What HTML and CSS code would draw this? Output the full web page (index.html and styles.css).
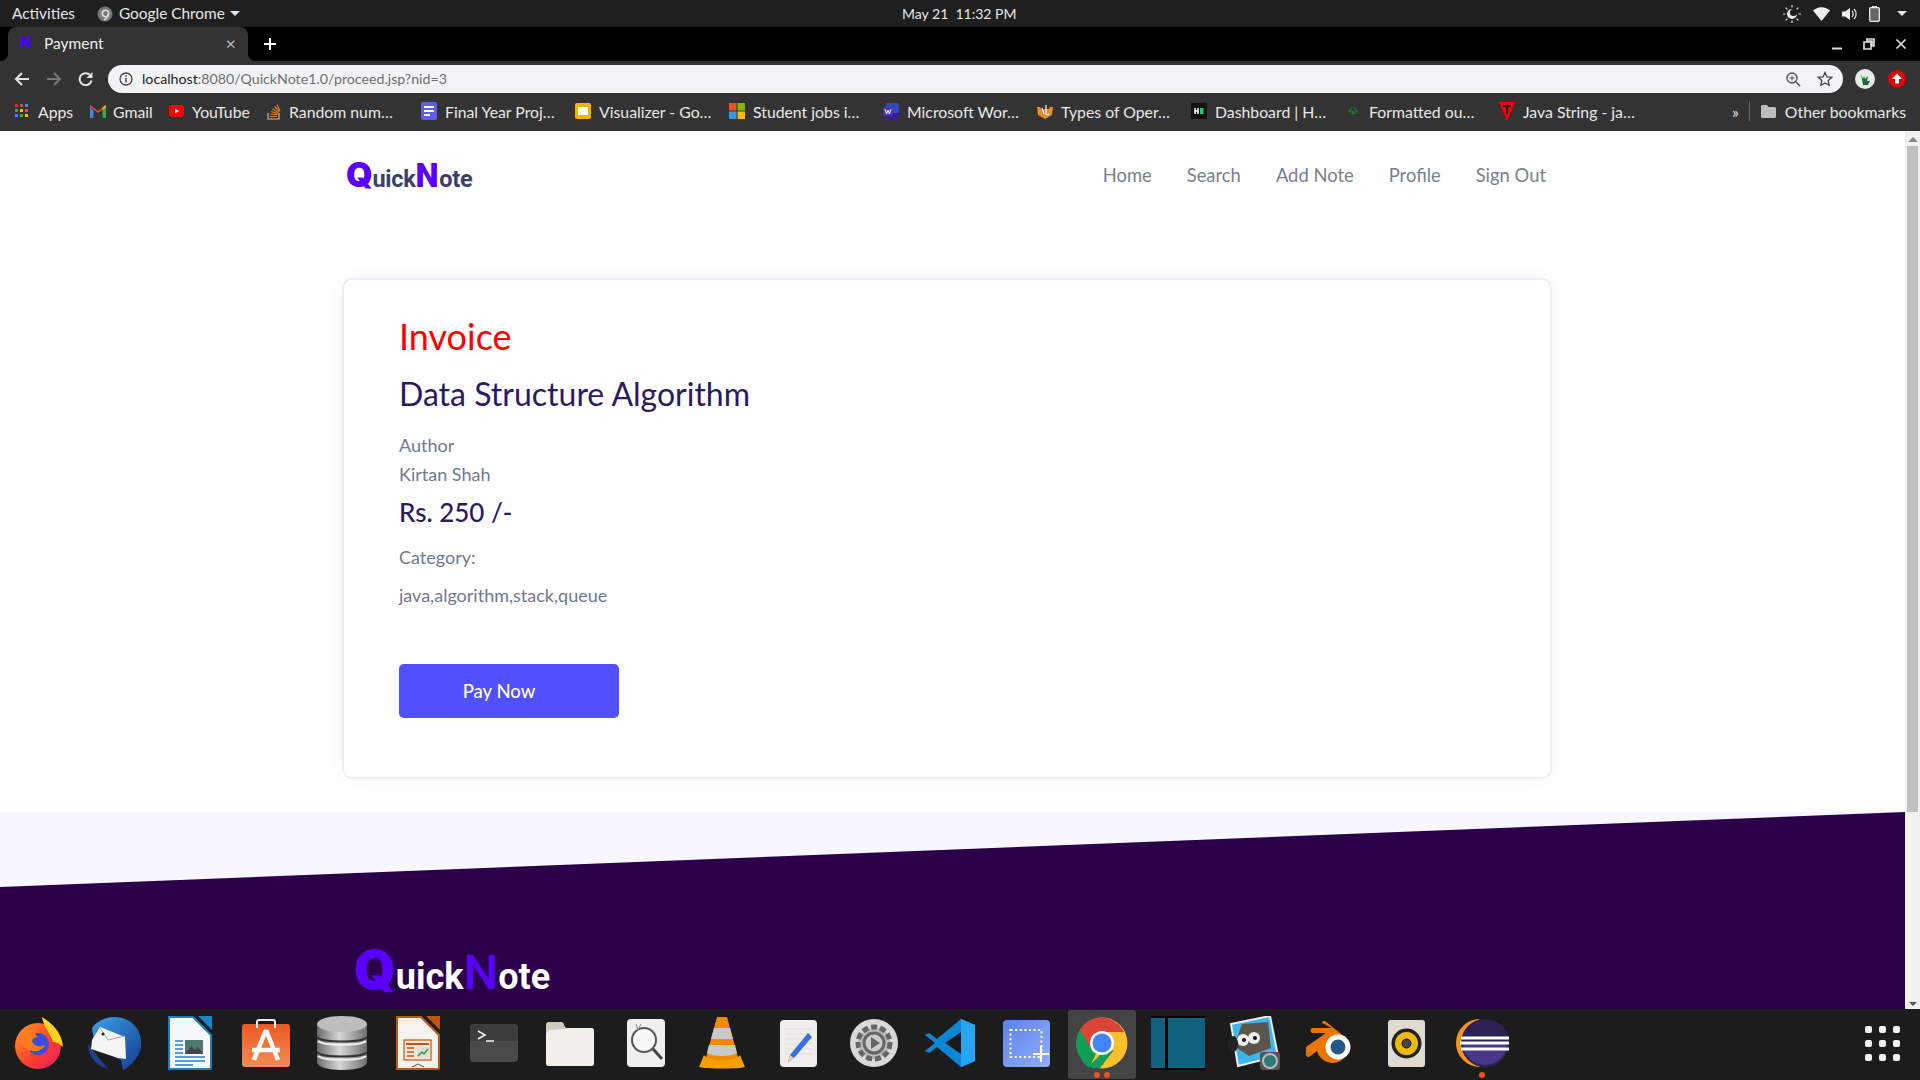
FILE: index.html
```html
<!DOCTYPE html>
<html lang="en">
<head>
<meta charset="utf-8">
<title>Payment</title>
<link rel="stylesheet" href="styles.css">
</head>
<body>
<div class="desktop">
  <div class="topbar">
    <div class="top-left">
      <span class="top-activities">Activities</span>
      <svg class="top-chrome" width="16" height="16" viewBox="0 0 16 16"><circle cx="8" cy="8" r="7.5" fill="#777"/><circle cx="8.5" cy="7.5" r="3.2" fill="none" stroke="#ddd" stroke-width="1.6"/><path d="M11 8c0 3-2 5-4 6" stroke="#ddd" stroke-width="1.4" fill="none"/></svg>
      <span>Google Chrome</span>
      <span class="caret"></span>
    </div>
    <div class="top-clock">May 21&nbsp; 11:32 PM</div>
    <div class="top-right">
      <svg width="18" height="18" viewBox="0 0 18 18"><circle cx="9" cy="9" r="5" fill="#e8e8e8"/><circle cx="10.5" cy="7.5" r="3.6" fill="#1f1f1f"/><g stroke="#ddd" stroke-width="1.2"><path d="M9 0v2.5M9 15.500V18M0 9h2.500M15.500 9H18M2.600 2.600l1.800 1.800M13.600 13.600l1.800 1.800M2.600 15.400l1.800-1.800M13.600 4.400l1.800-1.800"/></g></svg>
      <svg width="17" height="14" viewBox="0 0 17 14"><path d="M0 3.500C5 -1 12 -1 17 3.500L8.500 14Z" fill="#eee"/></svg>
      <svg width="15" height="14" viewBox="0 0 15 14"><path d="M0 4.500h3L8 1v12L3 9.500H0Z" fill="#eee"/><path d="M10 4c1.500 1.500 1.500 4.500 0 6M12 2c2.800 2.600 2.800 7.400 0 10" stroke="#eee" fill="none" stroke-width="1.200"/></svg>
      <svg width="11" height="16" viewBox="0 0 11 16"><rect x="3" width="5" height="2" fill="#eee"/><rect x=".7" y="1.700" width="9.600" height="13.600" rx="1" fill="#666" stroke="#eee" stroke-width="1.300"/></svg>
      <span class="caret"></span>
    </div>
  </div>

  <div class="tabstrip">
    <div class="tab">
      <span class="fav-n">N</span>
      <span class="tab-title">Payment</span>
      <span class="tab-close">×</span>
    </div>
    <svg class="tab-new" width="14" height="14" viewBox="0 0 14 14"><path d="M7 1v12M1 7h12" stroke="#fff" stroke-width="2"/></svg>
    <div class="win-controls">
      <svg width="12" height="12" viewBox="0 0 12 12"><path d="M1 10.500h10" stroke="#ddd" stroke-width="2"/></svg>
      <svg width="12" height="12" viewBox="0 0 12 12"><path d="M4 1h7v7H9V3H4ZM1 4h7v7H1Z" fill="none" stroke="#ddd" stroke-width="1.700"/></svg>
      <svg width="12" height="12" viewBox="0 0 12 12"><path d="M1.500 1.500l9 9M10.500 1.500l-9 9" stroke="#ddd" stroke-width="1.700"/></svg>
    </div>
  </div>

  <div class="toolbar">
    <svg class="nav-ico" width="16" height="16" viewBox="0 0 16 16"><path d="M15 8H2M8 2L2 8l6 6" fill="none" stroke="#e3e3e3" stroke-width="2"/></svg>
    <svg class="nav-ico" width="16" height="16" viewBox="0 0 16 16"><path d="M1 8h13M8 2l6 6-6 6" fill="none" stroke="#777" stroke-width="2"/></svg>
    <svg class="nav-ico" width="16" height="16" viewBox="0 0 16 16"><path d="M13.500 9.500A6 6 0 1 1 12 4" fill="none" stroke="#e3e3e3" stroke-width="2"/><path d="M14.500 1v6h-6Z" fill="#e3e3e3"/></svg>
    <div class="omnibox">
      <svg class="info-ico" width="14" height="14" viewBox="0 0 14 14"><circle cx="7" cy="7" r="6" fill="none" stroke="#444" stroke-width="1.300"/><path d="M7 6v4.500M7 3.300v1.500" stroke="#444" stroke-width="1.500"/></svg>
      <span class="url"><span class="url-host">localhost</span>:8080/QuickNote1.0/proceed.jsp?nid=3</span>
      <svg class="omni-ico" width="16" height="16" viewBox="0 0 16 16"><circle cx="7" cy="7" r="5" fill="none" stroke="#555" stroke-width="1.400"/><path d="M11 11l4 4" stroke="#555" stroke-width="1.600"/><path d="M7 4.500v5M4.500 7h5" stroke="#555"/></svg>
      <svg class="omni-ico" width="16" height="16" viewBox="0 0 16 16"><path d="M8 1.500l2 4.400 4.800.5-3.600 3.200 1 4.700L8 11.900l-4.200 2.400 1-4.700L1.200 6.400 6 5.900Z" fill="none" stroke="#444" stroke-width="1.300"/></svg>
    </div>
    <svg class="ext-ico" width="20" height="20" viewBox="0 0 20 20"><circle cx="10" cy="10" r="10" fill="#e8ece8"/><path d="M6 5l2 5 1-3 1 3 3-3-1 5 3 0-2 4H8Z" fill="#1c6b3c"/></svg>
    <svg class="ext-ico" width="18" height="18" viewBox="0 0 18 18"><circle cx="9" cy="9" r="9" fill="#e00000"/><path d="M9 3.500L14 9h-3v4.500H7V9H4Z" fill="#fff"/></svg>
  </div>

  <div class="bookmarks">
    <div class="bm bm-apps">
      <svg width="14" height="14" viewBox="0 0 14 14"><g><rect width="3" height="3" fill="#d93025"/><rect x="5" width="3" height="3" fill="#ea4335"/><rect x="10" width="3" height="3" fill="#4285f4"/><rect y="5" width="3" height="3" fill="#34a853"/><rect x="5" y="5" width="3" height="3" fill="#fbbc04"/><rect x="10" y="5" width="3" height="3" fill="#ea4335"/><rect y="10" width="3" height="3" fill="#4285f4"/><rect x="5" y="10" width="3" height="3" fill="#34a853"/><rect x="10" y="10" width="3" height="3" fill="#fbbc04"/></g></svg>
      <span>Apps</span>
    </div>
    <div class="bm bm-gmail">
      <svg width="16" height="13" viewBox="0 0 16 13"><path d="M0 2v11h3.500V5.500Z" fill="#4285f4"/><path d="M16 2v11h-3.500V5.500Z" fill="#34a853"/><path d="M0 2l8 6 8-6v-2l-3.500 2.500L8 6 3.500 2.500 0 0Z" fill="#ea4335"/><path d="M12.500 2.500L16 0v2l-3.500 3.500Z" fill="#fbbc04"/></svg>
      <span>Gmail</span>
    </div>
    <div class="bm bm-yt">
      <svg width="15" height="12" viewBox="0 0 15 12"><rect width="15" height="12" rx="3" fill="#f00"/><path d="M6 3.500L10 6 6 8.500Z" fill="#fff"/></svg>
      <span>YouTube</span>
    </div>
    <div class="bm bm-long">
      <svg width="14" height="17" viewBox="0 0 14 17"><path d="M1 10v6h11v-6" fill="none" stroke="#bbb" stroke-width="1.200"/><path d="M3 13.500h7M3.300 11l7 .7M4 8.500l6.800 2M5.500 6l6 3.500M7.500 3.500l5 5M10 1.500l3 6" stroke="#e8801f" stroke-width="1.200"/></svg>
      <span>Random num…</span>
    </div>
    <div class="bm bm-long">
      <svg width="16" height="18" viewBox="0 0 16 18"><rect width="16" height="18" rx="2" fill="#5f5fe8"/><path d="M3 5h10M3 9h10M3 13h6" stroke="#fff" stroke-width="2"/></svg>
      <span>Final Year Proj…</span>
    </div>
    <div class="bm bm-long">
      <svg width="16" height="16" viewBox="0 0 16 16"><rect width="16" height="16" rx="2" fill="#f4b400"/><rect x="3" y="4" width="10" height="8" fill="#fff"/></svg>
      <span>Visualizer - Go…</span>
    </div>
    <div class="bm bm-long">
      <svg width="16" height="16" viewBox="0 0 16 16"><rect width="7.500" height="7.500" fill="#f25022"/><rect x="8.500" width="7.500" height="7.500" fill="#7fba00"/><rect y="8.500" width="7.500" height="7.500" fill="#2f9bf0"/><rect x="8.500" y="8.500" width="7.500" height="7.500" fill="#ffb900"/></svg>
      <span>Student jobs i…</span>
    </div>
    <div class="bm bm-long">
      <svg width="16" height="16" viewBox="0 0 16 16"><rect x="3" width="13" height="16" rx="1" fill="#2f4bbd"/><rect x="3" y="10" width="13" height="6" fill="#3a1a9a"/><rect y="4" width="10" height="9" rx="1" fill="#4a2fb0"/><path d="M2 6l1.500 5L5 7l1.500 4L8 6" fill="none" stroke="#fff" stroke-width="1"/></svg>
      <span>Microsoft Wor…</span>
    </div>
    <div class="bm bm-long">
      <svg width="16" height="16" viewBox="0 0 16 16"><path d="M0 4l3 0 1 2h8l1-2 3 0-1 8-7 4-7-4Z" fill="#f08a24"/><path d="M5 5l2 6M9 2v9c0 1 2 1 3 0" stroke="#fff" stroke-width="1.200" fill="none"/></svg>
      <span>Types of Oper…</span>
    </div>
    <div class="bm bm-long">
      <svg width="16" height="16" viewBox="0 0 16 16"><rect width="16" height="16" rx="1" fill="#111"/><path d="M4 5v6M7 5v6M4 8h3" stroke="#fff" stroke-width="1.500"/><rect x="9" y="5" width="3.500" height="6" fill="#1ec76b"/></svg>
      <span>Dashboard | H…</span>
    </div>
    <div class="bm bm-long">
      <svg width="16" height="12" viewBox="0 0 16 12"><path d="M7.500 3A3 3 0 1 0 7.500 9V6H3M8.500 3A3 3 0 1 1 8.500 9V6H13" fill="none" stroke="#1a7a43" stroke-width="1"/></svg>
      <span>Formatted ou…</span>
    </div>
    <div class="bm bm-long">
      <svg width="16" height="19" viewBox="0 0 16 19"><path d="M0 0h16L8 19Z" fill="#f00"/><path d="M4 3h8v2H9v7H7V5H4Z" fill="#222"/></svg>
      <span>Java String - ja…</span>
    </div>
    <div class="bm-end">
      <span class="bm-more">»</span>
      <span class="bm-sep"></span>
      <svg width="15" height="13" viewBox="0 0 15 13"><path d="M0 1.500A1.500 1.500 0 0 1 1.500 0H6l1.500 2h6A1.500 1.500 0 0 1 15 3.500V11.500A1.500 1.500 0 0 1 13.500 13H1.500A1.500 1.500 0 0 1 0 11.500Z" fill="#bdbdbd"/></svg>
      <span>Other bookmarks</span>
    </div>
  </div>

  <div class="viewport">
    <main class="page">
      <div class="wrap">
        <header class="site-head">
          <div class="logo"><span class="logo-q">Q</span>uick<span class="logo-n">N</span>ote</div>
          <nav class="site-nav">
            <a>Home</a><a>Search</a><a>Add Note</a><a>Profile</a><a>Sign Out</a>
          </nav>
        </header>
        <section class="card">
          <h1 class="invoice">Invoice</h1>
          <h2 class="note-title">Data Structure Algorithm</h2>
          <p class="muted m-author">Author</p>
          <p class="muted m-name">Kirtan Shah</p>
          <h3 class="price">Rs. 250 /-</h3>
          <p class="muted m-cat">Category:</p>
          <p class="muted m-tags">java,algorithm,stack,queue</p>
          <button class="pay">Pay Now</button>
        </section>
      </div>
      <footer class="foot">
        <div class="foot-logo"><span class="logo-q">Q</span>uick<span class="logo-n">N</span>ote</div>
      </footer>
    </main>
    <div class="scrollbar">
      <span class="sb-up"></span>
      <div class="sb-thumb"></div>
      <span class="sb-down"></span>
    </div>
  </div>

  <div class="dock">
    <div class="cell"><svg width="52" height="52" viewBox="0 0 52 52"><defs><linearGradient id="ff" x1="0" y1="0" x2="1" y2="1"><stop offset="0" stop-color="#ff9a1f"/><stop offset=".6" stop-color="#ff3b30"/><stop offset="1" stop-color="#e3186b"/></linearGradient></defs><circle cx="26" cy="29" r="23" fill="url(#ff)"/><path d="M30 0c8 5 20 14 21 30-3-3-6-5-10-5-2-8-10-16-11-25Z" fill="#ffd21f"/><circle cx="26" cy="27" r="11" fill="#3a4fd8"/><path d="M8 22c4-8 11-10 16-9-2 3-1 5 2 7-5 0-7 3-5 6 2 4 8 4 12 2-2 6-12 8-18 4-4-3-7-5-7-10Z" fill="#ff7a1a"/></svg></div>
    <div class="cell"><svg width="54" height="54" viewBox="0 0 54 54"><defs><linearGradient id="tb" x1="0" y1="0" x2="1" y2="1"><stop offset="0" stop-color="#3fa0e8"/><stop offset="1" stop-color="#123a8f"/></linearGradient></defs><path d="M27 1a26 26 0 0 1 20 44c-3 4-8 8-11 9l-2-10L8 32 5 12C10 5 18 1 27 1Z" fill="url(#tb)"/><path d="M1 28c0 12 8 22 20 25l-9-11Z" fill="#1f3f8f"/><path d="M5 24l8-13 25 10 1 22-8-1L4 33Z" fill="#f5f5f5"/><path d="M13 12l8 12 17-4" fill="none" stroke="#aaa" stroke-width="1"/><circle cx="16" cy="18" r="1.500" fill="#123"/></svg></div>
    <div class="cell"><svg width="44" height="54" viewBox="0 0 44 54"><path d="M1 1h24l18 18v33a1 1 0 0 1-1 1H1Z" fill="#f6f8fa" stroke="#1a7fc4" stroke-width="2"/><path d="M30 0h14v14Z" fill="#1a85c8"/><rect x="17" y="24" width="18" height="14" fill="#4c7a6f"/><path d="M17 38l6-8 4 4 3-3 5 7Z" fill="#444"/><path d="M7 25h8M7 29h8M7 33h8M7 37h8M7 41h30M7 45h30M7 49h18" stroke="#1a85c8" stroke-width="1.600"/></svg></div>
    <div class="cell"><svg width="48" height="48" viewBox="0 0 48 48"><defs><linearGradient id="st" x1="0" y1="0" x2="0" y2="1"><stop offset="0" stop-color="#ed5a22"/><stop offset="1" stop-color="#f58b55"/></linearGradient></defs><rect y="5" width="48" height="43" rx="3" fill="url(#st)"/><path d="M15 9V3a2 2 0 0 1 2-2h14a2 2 0 0 1 2 2v6" fill="none" stroke="#eee" stroke-width="2"/><path d="M24 11L12 41M24 11l12 30M10 31h28" stroke="#fff" stroke-width="4.500" fill="none"/></svg></div>
    <div class="cell"><svg width="50" height="54" viewBox="0 0 50 54"><defs><linearGradient id="db" x1="0" y1="0" x2="1" y2="0"><stop offset="0" stop-color="#6a6a6a"/><stop offset=".45" stop-color="#d8d8d8"/><stop offset="1" stop-color="#6e6e6e"/></linearGradient></defs><path d="M0 8v38c0 5 11 8 25 8s25-3 25-8V8Z" fill="url(#db)"/><ellipse cx="25" cy="8" rx="25" ry="8" fill="#bdbdbd"/><path d="M0 21c4 6 46 6 50 0M0 36c4 6 46 6 50 0" fill="none" stroke="#333" stroke-width="2"/><path d="M1 25c6 5 42 5 48 0M1 40c6 5 42 5 48 0" fill="none" stroke="#eee" stroke-width="2"/></svg></div>
    <div class="cell"><svg width="44" height="54" viewBox="0 0 44 54"><path d="M1 1h24l18 18v33a1 1 0 0 1-1 1H1Z" fill="#f6f3ef" stroke="#c2560f" stroke-width="2"/><path d="M30 0h14v14Z" fill="#c2560f"/><rect x="8" y="24" width="27" height="20" fill="#f4e7da" stroke="#c2560f" stroke-width="1.200"/><path d="M10 28h23" stroke="#c2560f" stroke-width="2"/><path d="M11 32h7M11 36h7M11 40h7" stroke="#c2560f" stroke-width="1.500"/><rect x="21" y="31" width="12" height="11" fill="#ddd"/><path d="M22 40l4-4 2 2 4-5" stroke="#2a9a3a" fill="none" stroke-width="1.500"/><path d="M16 51l6-3 6 3" stroke="#555" fill="none"/></svg></div>
    <div class="cell"><svg width="48" height="38" viewBox="0 0 48 38"><rect width="48" height="38" rx="4" fill="#4a4a4a"/><path d="M0 17V4a4 4 0 0 1 4-4h40a4 4 0 0 1 4 4v13Z" fill="#3c3c3c"/><path d="M8 7l7 4-7 4" fill="none" stroke="#eee" stroke-width="1.600"/><path d="M16 17h8" stroke="#eee" stroke-width="1.600"/></svg></div>
    <div class="cell"><svg width="48" height="45" viewBox="0 0 48 45"><path d="M0 4a3 3 0 0 1 3-3h12a3 3 0 0 1 3 3l2 3h25a3 3 0 0 1 3 3v32a3 3 0 0 1-3 3H3a3 3 0 0 1-3-3Z" fill="#cfcbbd"/><path d="M0 14a5 5 0 0 1 5-5l14-1 3-1h23a3 3 0 0 1 3 3v32a3 3 0 0 1-3 3H3a3 3 0 0 1-3-3Z" fill="#f2f0ea"/></svg></div>
    <div class="cell"><svg width="38" height="48" viewBox="0 0 38 48"><rect width="38" height="48" rx="4" fill="#efefed"/><circle cx="17" cy="21" r="12" fill="#f7f7f7" stroke="#555" stroke-width="2"/><path d="M26 30l9 10" stroke="#444" stroke-width="3"/><path d="M9 5l2 6 3-6" fill="none" stroke="#888"/></svg></div>
    <div class="cell"><svg width="46" height="52" viewBox="0 0 46 52"><path d="M18 0h10l12 44H6Z" fill="#f08a00"/><path d="M15 11h16l3 11H12Z" fill="#c9c9c9"/><path d="M10 28h26l2 8c-6 4-24 4-30 0Z" fill="#c9c9c9"/><path d="M5 38L0 50c6 2 40 2 46 0l-5-12c-4 7-32 7-36 0Z" fill="#f5a000"/></svg></div>
    <div class="cell"><svg width="37" height="47" viewBox="0 0 37 47"><rect width="37" height="47" rx="4" fill="#efeeec"/><path d="M5 9h27M5 14h27M5 19h27M5 24h27M5 29h27M5 34h27" stroke="#ddd"/><path d="M32 17L14 38l-6 4 2-7L28 13Z" fill="#3a6fe0"/><path d="M8 42l2-7 4 3Z" fill="#eccda8"/></svg></div>
    <div class="cell"><svg width="48" height="48" viewBox="0 0 48 48"><circle cx="24" cy="24" r="24" fill="#d9d9d9"/><circle cx="24" cy="24" r="16" fill="#bbb" stroke="#666" stroke-width="5" stroke-dasharray="6 3"/><circle cx="24" cy="24" r="10" fill="#ccc" stroke="#666" stroke-width="3"/><path d="M21 18l9 6-9 6Z" fill="#666"/></svg></div>
    <div class="cell"><svg width="50" height="48" viewBox="0 0 50 48"><path d="M36 0l14 6v36l-14 6-24-20-8 6L0 32l10-8L0 16l4-2 8 6Z" fill="#0b87d6"/><path d="M36 0l14 6v36l-14 6Z" fill="#27a4f2"/><path d="M36 13v22L20 24Z" fill="#1a1a1a"/></svg></div>
    <div class="cell"><svg width="47" height="47" viewBox="0 0 47 47"><defs><linearGradient id="shot" x1="0" y1="0" x2="1" y2="1"><stop offset="0" stop-color="#5c83ee"/><stop offset="1" stop-color="#92aef5"/></linearGradient></defs><rect width="47" height="47" rx="4" fill="url(#shot)"/><rect x="7.500" y="10" width="31" height="27" fill="none" stroke="#fff" stroke-width="2" stroke-dasharray="2 2.600"/><path d="M38 26v16M30 34h16" stroke="#fff" stroke-width="2"/></svg></div>
    <div class="cell cell-active">
      <svg width="52" height="52" viewBox="0 0 52 52"><circle cx="26" cy="26" r="25.500" fill="#fbc02d"/><path d="M26 26L5 40A25.500 25.500 0 0 1 4 13Z" fill="#0f9d58"/><path d="M26 .5A25.500 25.500 0 0 0 4 13L14 30 26 15h22A25.500 25.500 0 0 0 26 .5Z" fill="#db4437"/><path d="M4 13l12 21 4 3-7 14C9 48 6 44 4 40A25.500 25.500 0 0 1 4 13Z" fill="#0f9d58"/><path d="M38 33L24 51C14 51 18 52 13 49l12-12Z" fill="#0f9d58"/><circle cx="26" cy="26" r="12" fill="#fff"/><circle cx="26" cy="26" r="9.500" fill="#4285f4"/></svg>
      <span class="run-dots"><i></i><i></i></span>
    </div>
    <div class="cell"><svg width="54" height="54" viewBox="0 0 54 54"><rect width="54" height="54" fill="#000"/><rect y="2" width="14" height="50" fill="#11607c"/><rect x="17" y="2" width="37" height="50" fill="#11607c"/></svg></div>
    <div class="cell"><svg width="52" height="54" viewBox="0 0 52 54"><path d="M3 8L42 0l8 40-40 10Z" fill="#3cb6ee" stroke="#eee" stroke-width="2"/><path d="M6 30l8-22 26-2 3 26-22 8Z" fill="#5b554a"/><circle cx="15" cy="24" r="6" fill="#eee"/><circle cx="26" cy="22" r="6" fill="#eee"/><circle cx="16" cy="24" r="2" fill="#111"/><circle cx="27" cy="22" r="2" fill="#111"/><ellipse cx="5" cy="28" rx="5" ry="8" fill="#222"/><rect x="32" y="36" width="20" height="18" rx="3" fill="#555"/><circle cx="42" cy="45" r="7" fill="#2a7a7a" stroke="#bbb" stroke-width="2"/></svg></div>
    <div class="cell"><svg width="52" height="44" viewBox="0 0 52 44"><path d="M2 26L22 12H8a3 3 0 0 1 0-5h20L18 2a2.500 2.500 0 0 1 3-2l20 16a16 16 0 1 1-28 14l-8 6a3 3 0 0 1-3-4Z" fill="#ea7600"/><circle cx="34" cy="26" r="12.500" fill="#fff"/><circle cx="34" cy="26" r="7.500" fill="#265787"/></svg></div>
    <div class="cell"><svg width="37" height="47" viewBox="0 0 37 47"><rect width="37" height="47" rx="3" fill="#dedbd0"/><circle cx="18.500" cy="23.500" r="15" fill="#222"/><circle cx="18.500" cy="23.500" r="11.500" fill="#ecb90f"/><circle cx="18.500" cy="23.500" r="4.500" fill="#444" stroke="#111"/></svg></div>
    <div class="cell cell-run">
      <svg width="54" height="48" viewBox="0 0 54 48"><path d="M25 0A24 24 0 0 0 25 48 30 30 0 0 1 25 0Z" fill="#f7941e"/><circle cx="30" cy="24" r="24" fill="#2c2255"/><path d="M8 24a22 22 0 0 0 44 0Z" fill="#473788"/><path d="M6 19h48M5 24h49M6 30h48" stroke="#fff" stroke-width="3"/></svg>
      <span class="run-dots"><i></i></span>
    </div>
    <div class="apps-grid">
      <i></i><i></i><i></i><i></i><i></i><i></i><i></i><i></i><i></i>
    </div>
  </div>
</div>
</body>
</html>
```

FILE: styles.css
```css
* { box-sizing: border-box; }
html, body { margin: 0; height: 100%; overflow: hidden; }
body { font-family: "Noto Sans", sans-serif; }
p, h1, h2, h3 { margin: 0; }

.desktop { width: 1920px; height: 1080px; display: flex; flex-direction: column; }

/* GNOME top bar */
.topbar { height: 27px; flex: none; background: #1f1f1f; color: #e6e6e6; font: 15.4px/27px "Lato", sans-serif; display: flex; justify-content: space-between; position: relative; }
.top-left { display: flex; align-items: center; padding-left: 12px; }
.top-activities { margin-right: 22px; }
.top-chrome { margin-right: 6px; }
.top-clock { position: absolute; left: 902px; top: 0; font-size: 14px; }
.top-right { display: flex; align-items: center; gap: 12px; padding-right: 13px; }
.caret { width: 0; height: 0; border: 5px solid transparent; border-top: 5px solid #e6e6e6; border-bottom: 0; margin-left: 5px; }

/* tabs */
.tabstrip { height: 34px; flex: none; background: #000; display: flex; align-items: center; padding-left: 8px; }
.tab { position: relative; width: 240px; height: 34px; background: #333; border-radius: 8px 8px 0 0; display: flex; align-items: center; padding: 0 12px 2px; color: #eee; font: 15.5px "Lato", sans-serif; }
.tab::before, .tab::after { content: ""; position: absolute; bottom: 0; width: 8px; height: 8px; }
.tab::before { left: -8px; background: radial-gradient(circle at 0 0, transparent 8px, #333 8.5px); }
.tab::after { right: -8px; background: radial-gradient(circle at 100% 0, transparent 8px, #333 8.5px); }
.fav-n { color: #4b00ff; font: 900 16px/1 "Roboto", sans-serif; width: 16px; }
.tab-title { flex: 1; margin-left: 8px; }
.tab-close { color: #bbb; font-size: 18px; }
.tab-new { margin-left: 15px; }
.win-controls { margin-left: auto; display: flex; gap: 20px; padding-right: 13px; }

/* toolbar */
.toolbar { height: 32px; flex: none; background: #333; display: flex; align-items: center; padding: 4px 0 0 14px; }
.nav-ico { margin-right: 16px; }
.nav-ico:nth-of-type(3) { margin-right: 14px; }
.omnibox { flex: none; width: 1735px; height: 28px; background: #f1f3f4; border-radius: 14px; display: flex; align-items: center; padding: 0 10px 0 11px; color: #6f6f6f; font: 14.2px "Lato", sans-serif; }
.info-ico { margin-right: 9px; }
.url { flex: 1; margin-bottom: 2px; }
.url-host { color: #222; }
.omni-ico { margin-left: 16px; }
.ext-ico { margin-left: 12px; }
.ext-ico:last-child { margin-left: 13px; }

/* bookmarks */
.bookmarks { height: 38px; flex: none; background: #333; color: #e8e8e8; display: flex; align-items: center; padding: 0 14px 2px 15px; font: 15.8px "Lato", sans-serif; white-space: nowrap; }
.bm { display: flex; align-items: center; gap: 8px; flex: none; }
.bm-apps { width: 75px; gap: 9px; }
.bm-gmail { width: 79px; gap: 7px; }
.bm-yt { width: 98px; gap: 8px; }
.bm-long { width: 154px; }
.bm-long svg { flex: none; }
.bm-end { margin-left: auto; display: flex; align-items: center; }
.bm-more { margin-right: 10px; }
.bm-sep { width: 1px; height: 20px; background: #666; margin-right: 11px; }
.bm-end svg { margin-right: 9px; }

/* page */
.viewport { flex: 1; min-height: 0; display: flex; overflow: hidden; }
.page { flex: 1; min-width: 0; background: #fff; overflow: hidden; }
.wrap { width: 1210px; margin-left: 342px; }
.site-head { height: 147px; display: flex; align-items: flex-start; justify-content: space-between; padding: 30px 6px 0 4px; }
.logo { font: 700 23.5px/28px "Roboto", sans-serif; color: #3d3f6b; letter-spacing: -.3px; }
.logo-q { color: #5a00ff; font: 900 34px/28px "Inter", sans-serif; }
.logo-n { color: #5a00ff; font: 900 33px/28px "Roboto", sans-serif; margin-right: 1px; }
.site-nav { display: flex; gap: 35px; font: 18.4px/28px "Lato", sans-serif; color: #7a7f8a; }
.card { height: 501px; border: 2px solid #eeedf6; border-radius: 10px; padding: 34px 55px; box-shadow: 0 0 20px rgba(40,20,90,.04); }
.invoice { font: 400 36px/44px "Lato", sans-serif; color: #f00; }
.note-title { font: 400 32px/40px "Lato", sans-serif; color: #2b1a60; margin-top: 16px; }
.muted { font: 18px/29px "Lato", sans-serif; color: #727891; }
.m-author { margin-top: 17px; }
.price { font: 500 26px/34px "Lato", sans-serif; color: #2b1a60; margin-top: 6px; }
.m-cat { margin-top: 14px; }
.m-tags { margin-top: 9px; }
.pay { display: block; width: 220px; height: 54px; margin-top: 54px; border: 0; border-radius: 5px; background: #5050ff; color: #fff; font: 500 18.5px "Lato", sans-serif; padding: 0 20px 0 0; text-align: center; }
.foot { height: 197px; margin-top: 33px; background: #f8f7ff; }
.foot-logo { height: 197px; background: #2a004a; clip-path: polygon(0 75px, 100% 0, 100% 100%, 0 100%); padding: 133px 0 0 354px; color: #fff; font: 700 36px/50px "Roboto", sans-serif; }
.foot-logo .logo-q { font: 900 53px/50px "Inter", sans-serif; color: #5a00ff; }
.foot-logo .logo-n { font: 500 49px/50px "Roboto", sans-serif; color: #5a00ff; margin-right: 0; }

/* scrollbar */
.scrollbar { flex: none; width: 15px; background: #f1f1f1; display: flex; flex-direction: column; align-items: center; }
.sb-up { margin-top: 6px; border: 5px solid transparent; border-bottom: 5px solid #888; border-top: 0; }
.sb-thumb { width: 11px; height: 666px; margin-top: 4px; background: #c1c1c1; }
.sb-down { margin-top: auto; margin-bottom: 3px; border: 4px solid transparent; border-top: 4px solid #555; border-bottom: 0; }

/* dock */
.dock { height: 71px; flex: none; background: #1c1c1c; display: flex; align-items: center; }
.cell { position: relative; width: 76px; height: 71px; flex: none; display: flex; align-items: center; justify-content: center; padding-bottom: 3px; }
.cell-active::before { content: ""; position: absolute; left: 4px; top: 1px; width: 68px; height: 69px; background: #444; border-radius: 3px; }
.cell-active svg { position: relative; }
.run-dots { position: absolute; left: 0; right: 0; bottom: 2px; display: flex; justify-content: center; gap: 4px; }
.run-dots i { width: 6px; height: 6px; border-radius: 50%; background: #e95420; }
.apps-grid { margin-left: auto; margin-right: 20px; display: grid; grid-template-columns: repeat(3, 7px); grid-gap: 7px; margin-bottom: 2px; }
.apps-grid i { width: 7px; height: 7px; border-radius: 2px; background: #f2f2f2; }
```
